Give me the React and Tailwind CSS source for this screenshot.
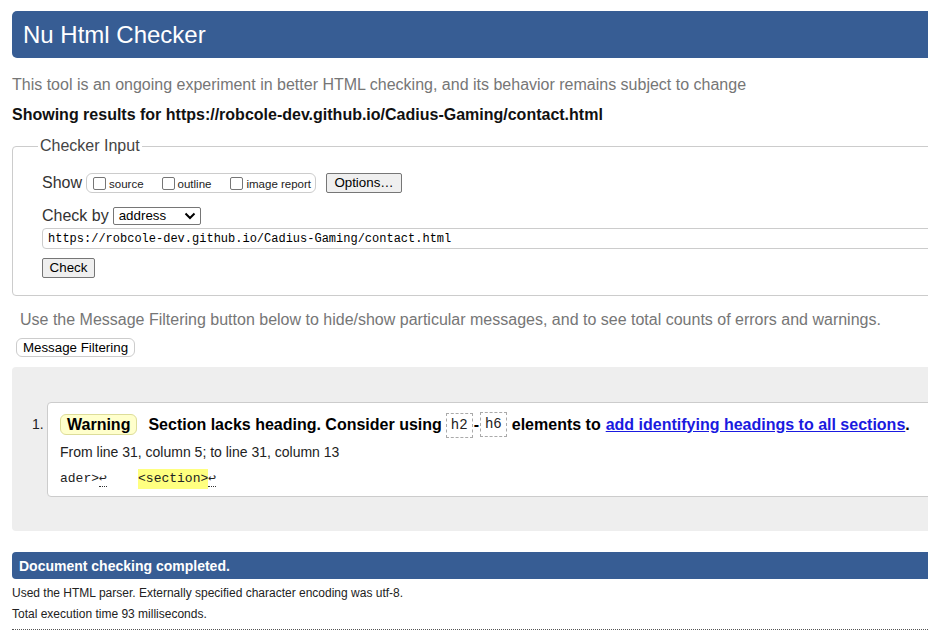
import React from 'react';

const sans = { fontFamily: '"Liberation Sans", Arial, sans-serif' };

// Checkbox + label in the "Show" group
const ShowOption = ({ label, gap }) => (
  <label className={`flex items-center whitespace-nowrap ${gap}`}>
    <span className="w-[13px] h-[13px] border border-[#767676] rounded-[2px] bg-white mr-[3px] mt-[1px]" />
    <span className="text-[11.5px] leading-[14px] text-[#222] mt-[2px]">{label}</span>
  </label>
);

const Code = ({ children }) => (
  <code className="inline-block border border-dashed border-[#aaa] px-[4px] h-[25px] leading-[23px] font-['Liberation_Mono',monospace] text-[14px] font-normal text-[#222]">
    {children}
  </code>
);

const LineBreak = () => (
  <span className="border-b border-dotted border-[#333] leading-[14px]">↩</span>
);

export default function App() {
  return (
    <div className="w-[928px] h-[635px] overflow-hidden bg-white text-[#222]" style={sans}>
      <div className="w-[1000px] pl-[12px] pt-[11px]">
        {/* Header */}
        <div className="h-[47px] bg-[#375d94] rounded-l-[5px] flex items-center pl-[11px]">
          <h1 className="text-white text-[24px] leading-[28px] font-normal">Nu Html Checker</h1>
        </div>

        <p className="mt-[18px] text-[16px] leading-[18px] text-[#767676]">
          This tool is an ongoing experiment in better HTML checking, and its behavior remains subject to change
        </p>
        <p className="mt-[12px] text-[16px] leading-[18px] font-bold text-[#111]">
          Showing results for https://robcole-dev.github.io/Cadius-Gaming/contact.html
        </p>

        {/* Checker Input */}
        <fieldset className="mt-[13px] border border-[#ccc] rounded-[4px] pl-[29px] pb-[17px]">
          <legend className="ml-[-4px] px-[2px] text-[16px] leading-[18px] text-[#444]">Checker Input</legend>

          <div className="mt-[17px] h-[22px] flex items-center">
            <span className="text-[16px] leading-[18px] text-[#333]">Show</span>
            <div className="ml-[4px] h-[20px] w-[230px] border border-[#ccc] rounded-[6px] flex items-center pl-[6px]">
              <ShowOption label="source" gap="mr-[18px]" />
              <ShowOption label="outline" gap="mr-[19px]" />
              <ShowOption label="image report" gap="" />
            </div>
            <button className="ml-[10px] h-[20px] w-[76px] bg-[#efefef] border border-[#767676] rounded-[2px] text-[13.33px] leading-[16px] text-black">
              Options…
            </button>
          </div>

          <div className="mt-[13px] h-[18px] flex items-center">
            <span className="text-[16px] leading-[18px] text-[#333]">Check by</span>
            <div className="ml-[4px] h-[18px] w-[88px] border border-[#767676] rounded-[2px] bg-white flex items-center justify-between pl-[5px] pr-[4px]">
              <span className="text-[13.33px] leading-[16px] text-black">address</span>
              <svg width="12" height="8" viewBox="0 0 12 8" fill="none">
                <path d="M1.5 1.5 L6 6 L10.5 1.5" stroke="#000" strokeWidth="2" />
              </svg>
            </div>
          </div>

          <div className="mt-[3px] h-[21px] border border-[#ccc] rounded-[4px] flex items-center pl-[5px]">
            <span className="font-['Liberation_Mono',monospace] text-[12px] leading-[14px] text-black">
              https://robcole-dev.github.io/Cadius-Gaming/contact.html
            </span>
          </div>

          <button className="mt-[9px] h-[20px] w-[53px] bg-[#efefef] border border-[#767676] rounded-[2px] text-[13.33px] leading-[16px] text-black block">
            Check
          </button>
        </fieldset>

        <p className="mt-[15px] ml-[8px] text-[16px] leading-[18px] text-[#767676]">
          Use the Message Filtering button below to hide/show particular messages, and to see total counts of errors and warnings.
        </p>
        <button className="mt-[9px] ml-[4px] h-[19px] w-[119px] bg-white border border-[#ccc] rounded-[6px] text-[13.33px] leading-[16px] text-black block">
          Message Filtering
        </button>

        {/* Results */}
        <div className="mt-[10px] bg-[#eeeeee] rounded-l-[4px] pt-[35px] pb-[34px] pl-[20px] flex items-start">
          <span className="w-[15px] pt-[14px] text-[14px] leading-[16px] text-[#222]">1.</span>
          <div className="flex-1 bg-white border border-[#ccc] rounded-l-[4px] pl-[12px] pt-[8px] pb-[7px]">
            <div className="flex items-center h-[27px] text-[16px] font-bold text-black whitespace-nowrap">
              <span className="h-[21px] px-[6px] bg-[#ffffcc] border border-[#dddd99] rounded-[6px] leading-[19px]">Warning</span>
              <span className="ml-[11px]">Section lacks heading. Consider using</span>
              <span className="ml-[4px]"><Code>h2</Code></span>
              <span className="mx-[1px]">-</span>
              <Code>h6</Code>
              <span className="ml-[5px]">elements to</span>
              <a href="#" className="ml-[5px] text-[#1a1ae0] underline">add identifying headings to all sections</a>
              <span>.</span>
            </div>
            <p className="mt-[6px] text-[14px] leading-[16px] text-[#222]">
              From line 31, column 5; to line 31, column 13
            </p>
            <div className="mt-[9px] h-[20px] flex items-center font-['Liberation_Mono',monospace] text-[13px] text-[#222] whitespace-pre">
              <span>ader&gt;</span>
              <LineBreak />
              <span>    </span>
              <mark className="bg-[#ffff80] text-[#222] leading-[20px]">&lt;section&gt;</mark>
              <LineBreak />
            </div>
          </div>
        </div>

        {/* Footer */}
        <div className="mt-[21px] h-[27px] bg-[#375d94] rounded-l-[4px] flex items-center pl-[7px]">
          <h2 className="text-white text-[14px] leading-[16px] font-bold">Document checking completed.</h2>
        </div>
        <p className="mt-[7px] text-[12px] leading-[14px] text-[#222]">
          Used the HTML parser. Externally specified character encoding was utf-8.
        </p>
        <p className="mt-[7px] text-[12px] leading-[14px] text-[#222]">
          Total execution time 93 milliseconds.
        </p>
        <div className="mt-[8px] border-t border-dotted border-[#555]" />
      </div>
    </div>
  );
}
